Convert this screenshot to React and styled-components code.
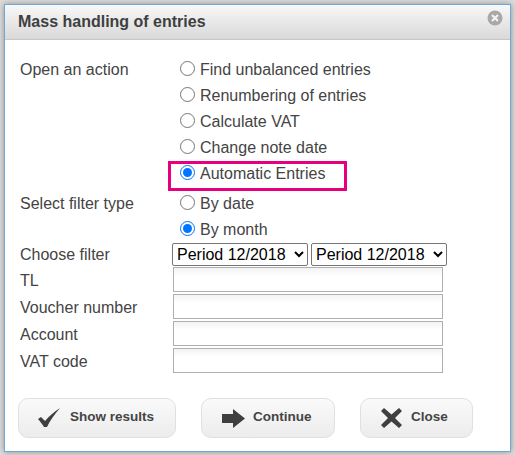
import React from "react";
import styled, { createGlobalStyle } from "styled-components";

const GlobalStyle = createGlobalStyle`
  html, body {
    margin: 0;
    padding: 0;
    height: 100%;
    background: #dcdcdc;
    font-family: "Liberation Sans", Arial, sans-serif;
  }
  #root {
    height: 100%;
  }
`;

const Page = styled.div`
  width: 515px;
  height: 455px;
  padding: 4px 4px 3px 4px;
  box-sizing: border-box;
  overflow: hidden;
`;

const Dialog = styled.div`
  position: relative;
  width: 507px;
  height: 448px;
  box-sizing: border-box;
  border: 1px solid #6fa8d8;
  background: #fff;
  box-shadow: 0 0 6px rgba(0, 0, 0, 0.35);
  display: flex;
  flex-direction: column;
`;

const Header = styled.div`
  height: 35px;
  box-sizing: border-box;
  padding: 7px 0 0 13px;
  border-bottom: 1px solid #c8c8c8;
  background: linear-gradient(#f8f8f8, #d9d9d9);
  font-size: 16px;
  font-weight: bold;
  line-height: 20px;
  color: #3f3f3f;
`;

const CloseIcon = styled.svg`
  position: absolute;
  top: 5px;
  right: 7px;
  width: 16px;
  height: 16px;
`;

const Body = styled.div`
  flex: 1;
  padding: 17px 15px 0 15px;
  display: flex;
  flex-direction: column;
  justify-content: space-between;
`;

const Form = styled.div`
  display: grid;
  grid-template-columns: 152px 1fr;
  font-size: 16px;
  color: #444;
`;

const Label = styled.div`
  line-height: ${({ $height }) => $height}px;
  height: ${({ $height }) => $height}px;
  margin-top: ${({ $top }) => $top || 0}px;
`;

const RadioGroup = styled.div`
  display: flex;
  flex-direction: column;
  margin-top: ${({ $top }) => $top || 0}px;
`;

const RadioRow = styled.label`
  position: relative;
  height: 26px;
  display: flex;
  align-items: center;
  gap: 5px;
  padding-left: 8px;
  line-height: 26px;
  ${({ $marked }) =>
    $marked &&
    `
    &::after {
      content: "";
      position: absolute;
      left: -4px;
      top: 0;
      width: 179px;
      height: 30px;
      box-sizing: border-box;
      border: 3px solid #e6007e;
    }
  `}
`;

const Radio = styled.input.attrs({ type: "radio" })`
  width: 15px;
  height: 15px;
  margin: -3px 0 0 0;
  flex: none;
`;

const SelectRow = styled.div`
  display: flex;
  gap: 3px;
  height: 24px;
`;

const Select = styled.select`
  width: 136px;
  height: 23px;
  font-family: "Liberation Sans", Arial, sans-serif;
  font-size: 16px;
  color: #000;
  background: #fff;
  border: 1px solid #767676;
  border-radius: 2px;
  padding: 0;
`;

const FieldCell = styled.div`
  height: 27px;
  padding-left: 1px;
`;

const TextInput = styled.input`
  display: block;
  width: 270px;
  height: 25px;
  box-sizing: border-box;
  border: 1px solid #b0b0b0;
  background: linear-gradient(#f3f3f3, #fff 8px);
  outline: none;
`;

const ButtonRow = styled.div`
  display: flex;
  height: 40px;
  margin: 0 0 13px -2px;
`;

const Button = styled.button`
  width: ${({ $width }) => $width}px;
  margin-right: ${({ $gap }) => $gap || 0}px;
  height: 40px;
  box-sizing: border-box;
  display: flex;
  align-items: center;
  gap: ${({ $iconGap }) => $iconGap}px;
  padding: 0 0 0 ${({ $pad }) => $pad}px;
  border: 1px solid #e0e0e0;
  border-radius: 10px;
  background: linear-gradient(#fafafa, #ececec);
  font-family: "Liberation Sans", Arial, sans-serif;
  font-size: 13.5px;
  font-weight: bold;
  color: #444;
  white-space: nowrap;
`;

const ButtonText = styled.span`
  margin-top: -3px;
`;

const IconBox = styled.svg`
  flex: none;
  fill: #3f3f3f;
`;

const CheckGlyph = () => (
  <IconBox width="24" height="20" viewBox="0 0 24 20">
    <path d="M1 11l3-2 4 4C12 8 17 4 23 0c-5 6-10 12-13 19h-3C5 16 3 13 1 11z" />
  </IconBox>
);

const ArrowGlyph = () => (
  <IconBox width="23" height="19" viewBox="0 0 23 19">
    <path d="M0 5h11V0l12 9.5L11 19v-5H0z" />
  </IconBox>
);

const CrossGlyph = () => (
  <IconBox width="21" height="20" viewBox="0 0 21 20">
    <path d="M3 0l7.500 6.500L18 0l3 3-7 7 7 7-3 3-7.500-6.500L3 20l-3-3 7-7-7-7z" />
  </IconBox>
);

const actions = [
  "Find unbalanced entries",
  "Renumbering of entries",
  "Calculate VAT",
  "Change note date",
  "Automatic Entries",
];

const fields = ["TL", "Voucher number", "Account", "VAT code"];

const PeriodSelect = () => (
  <Select defaultValue="12">
    <option value="12">Period 12/2018</option>
  </Select>
);

export default function App() {
  return (
    <Page>
      <GlobalStyle />
      <Dialog>
        <Header>Mass handling of entries</Header>
        <CloseIcon viewBox="0 0 16 16">
          <circle cx="8" cy="8" r="7.500" fill="#a8a8a8" />
          <path d="M5 5l6 6M11 5l-6 6" stroke="#f2f2f2" strokeWidth="2.200" />
        </CloseIcon>
        <Body>
          <Form>
            <Label $height={26}>Open an action</Label>
            <RadioGroup>
              {actions.map((text, i) => (
                <RadioRow key={text} $marked={i === 4}>
                  <Radio name="action" defaultChecked={i === 4} />
                  {text}
                </RadioRow>
              ))}
            </RadioGroup>
            <Label $height={26} $top={4}>Select filter type</Label>
            <RadioGroup $top={4}>
              <RadioRow>
                <Radio name="filter" />
                By date
              </RadioRow>
              <RadioRow>
                <Radio name="filter" defaultChecked />
                By month
              </RadioRow>
            </RadioGroup>
            <Label $height={24}>Choose filter</Label>
            <SelectRow>
              <PeriodSelect />
              <PeriodSelect />
            </SelectRow>
            {fields.map((name) => (
              <React.Fragment key={name}>
                <Label $height={27}>{name}</Label>
                <FieldCell>
                  <TextInput />
                </FieldCell>
              </React.Fragment>
            ))}
          </Form>
          <ButtonRow>
            <Button $width={158} $gap={25} $pad={18} $iconGap={9}>
              <CheckGlyph />
              <ButtonText>Show results</ButtonText>
            </Button>
            <Button $width={134} $gap={25} $pad={20} $iconGap={8}>
              <ArrowGlyph />
              <ButtonText>Continue</ButtonText>
            </Button>
            <Button $width={113} $pad={20} $iconGap={9}>
              <CrossGlyph />
              <ButtonText>Close</ButtonText>
            </Button>
          </ButtonRow>
        </Body>
      </Dialog>
    </Page>
  );
}
